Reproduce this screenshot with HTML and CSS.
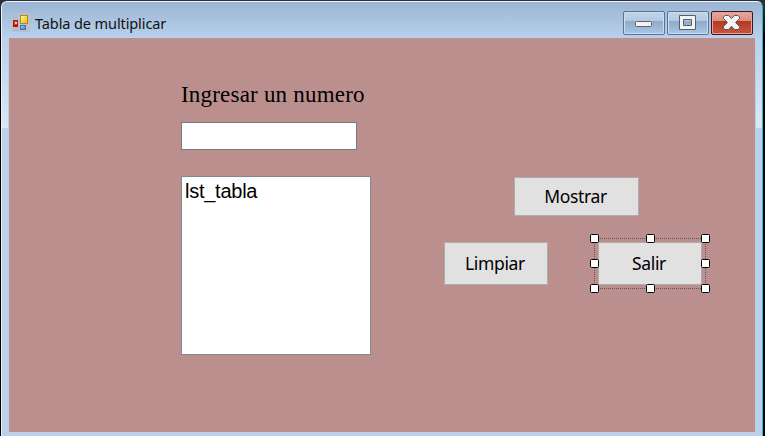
FILE: index.html
```html
<!DOCTYPE html>
<html lang="es">
<head>
<meta charset="utf-8">
<title>Tabla de multiplicar</title>
<link rel="stylesheet" href="styles.css">
</head>
<body>
<div class="window">
  <header class="titlebar">
    <svg class="app-icon" width="18" height="18" viewBox="0 0 18 18">
      <defs>
        <linearGradient id="gold" x2="1" y2="1"><stop stop-color="#fff3a0"/><stop offset="1" stop-color="#f2b90d"/></linearGradient>
        <linearGradient id="blue" x2="1" y2="1"><stop stop-color="#a9d0ff"/><stop offset="1" stop-color="#3478dc"/></linearGradient>
      </defs>
      <path fill="#bfc0c2" d="M0 0h18v18H0z"/>
      <path fill="#a9bfd9" d="M1 1h5v4H1zM1 14h5v3H1z"/>
      <path fill="#b5861c" d="M8 1h8v9H8z"/><path fill="url(#gold)" d="M9 2h6v7H9z"/>
      <path fill="#a81b0d" d="M1 6h5v7H1z"/><path fill="#d83b22" d="M2 7h3v4H2z"/><path fill="#ffc3ae" d="M3 8h2v2H3z"/>
      <path fill="#3b6fc4" d="M8 11h6v5H8z"/><path fill="url(#blue)" d="M9 12h4v3H9z"/>
    </svg>
    <h1 class="title">Tabla de multiplicar</h1>
    <div class="caption-buttons">
      <button class="caption" aria-label="Minimizar"><svg width="40" height="22" viewBox="0 0 40 22"><rect x="11.500" y="9.500" width="16" height="5" rx="1" fill="#f3f3f3" stroke="#5b626d"/></svg></button>
      <button class="caption" aria-label="Maximizar"><svg width="40" height="22" viewBox="0 0 40 22"><path fill="#f3f3f3" fill-rule="evenodd" stroke="#565e69" d="M11.500 3.500h16v14h-16zM15.500 7.500v6h8v-6z"/></svg></button>
      <button class="caption close" aria-label="Cerrar"><svg width="40" height="22" viewBox="0 0 40 22"><path fill="#f5f5f5" stroke="#5c5560" stroke-linejoin="round" d="M13 3.500h3.500l3 3.200 3-3.200H26l1.500 1.500v1.500L23.500 10.500l4 4V16L26 17.500h-3.500l-3-3.200-3 3.200H13L11.500 16v-1.500l4-4-4-4V5z"/></svg></button>
    </div>
  </header>
  <main class="form">
    <section class="inputs">
      <label class="prompt" for="numero">Ingresar un numero</label>
      <input class="number" id="numero" type="text">
      <div class="list">lst_tabla</div>
    </section>
    <section class="actions">
      <button class="action show">Mostrar</button>
      <div class="row">
        <button class="action">Limpiar</button>
        <div class="selected">
          <button class="action">Salir</button>
          <svg class="selection" width="120" height="59" viewBox="0 0 120 59">
            <path class="guide" d="M4 4.500h112M4 54.500h112M4.500 4v51M115.500 4v51"/>
            <g class="handles">
              <rect x=".5" y=".5" width="8" height="8" rx="1"/><rect x="56.500" y=".5" width="8" height="8" rx="1"/><rect x="111.500" y=".5" width="8" height="8" rx="1"/>
              <rect x=".5" y="25.500" width="8" height="8" rx="1"/><rect x="111.500" y="25.500" width="8" height="8" rx="1"/>
              <rect x=".5" y="50.500" width="8" height="8" rx="1"/><rect x="56.500" y="50.500" width="8" height="8" rx="1"/><rect x="111.500" y="50.500" width="8" height="8" rx="1"/>
            </g>
          </svg>
        </div>
      </div>
    </section>
  </main>
</div>
</body>
</html>
```
FILE: styles.css
```css
* { box-sizing: border-box; }
body {
  margin: 0;
  padding: 1px 2px 0 1px;
  height: 436px;
  overflow: hidden;
  background: linear-gradient(#302e36 0 5px, #000 38px);
}
button { margin: 0; padding: 0; font: inherit; }
.window {
  height: 440px;
  padding: 0 7px;
  border: 1px solid #eef4fb;
  border-right-color: #27b5df;
  border-radius: 6px 6px 0 0;
  background:
    linear-gradient(#b9d1ea, #dbe8f5) 0 36px / 6px 90px no-repeat,
    linear-gradient(#b9d1ea, #dbe8f5) 100% 36px / 6px 90px no-repeat,
    linear-gradient(#9ab5d4, #b9d1ea 36px);
}
.titlebar {
  display: flex;
  align-items: flex-start;
  height: 36px;
  padding-left: 3px;
}
.app-icon { margin-top: 12px; }
.title {
  margin: 11px 0 0 5px;
  font: 400 14.500px/20px "Noto Sans", sans-serif;
  letter-spacing: -0.100px;
  color: #111;
}
.caption-buttons { display: flex; gap: 2px; margin: 9px 2px 0 auto; }
.caption {
  width: 42px;
  height: 24px;
  border: 1px solid #5d7290;
  border-radius: 2px;
  background: linear-gradient(#c0d5ea, #b1c9e3 42%, #91abca 43%, #a9c6e3);
  box-shadow: inset 0 0 0 1px #cbdef0;
}
.caption svg { display: block; }
.close {
  border-color: #431422;
  background: linear-gradient(#eaa99d, #d98a7c 42%, #b43a22 43%, #c5573e);
  box-shadow: inset 0 0 0 1px #e7a295;
}
.form {
  display: flex;
  height: 394px;
  width: 746px;
  padding: 42px 0 0 172px;
  background: #bc8f8f;
}
.inputs { display: flex; flex-direction: column; width: 263px; }
.prompt {
  height: 42px;
  font: 23px/30px "Liberation Serif", serif;
  letter-spacing: 0.200px;
  white-space: nowrap;
}
.number {
  width: 176px;
  height: 28px;
  padding: 2px;
  border: 1px solid #7a7a7a;
  border-radius: 0;
  background: #fff;
}
.list {
  width: 190px;
  height: 179px;
  margin-top: 26px;
  padding: 2px 3px;
  border: 1px solid #828790;
  background: #fff;
  font: 20px/24px "Liberation Sans", sans-serif;
  letter-spacing: -0.250px;
}
.actions { width: 258px; padding-top: 97px; }
.action {
  display: block;
  width: 104px;
  height: 43px;
  padding: 0 2px 2px 0;
  border: 1px solid #adadad;
  background: #e1e1e1;
  color: #000;
  font: 17.500px/24px "Noto Sans", sans-serif;
  letter-spacing: -0.350px;
}
.show { width: 125px; height: 39px; margin-left: 70px; }
.row { display: flex; gap: 50px; margin-top: 26px; }
.selected { position: relative; }
.selection { position: absolute; left: -8px; top: -8px; }
.guide { fill: none; stroke: #625558; stroke-dasharray: 1 1; }
.handles { fill: #fff; stroke: #000; }
```
